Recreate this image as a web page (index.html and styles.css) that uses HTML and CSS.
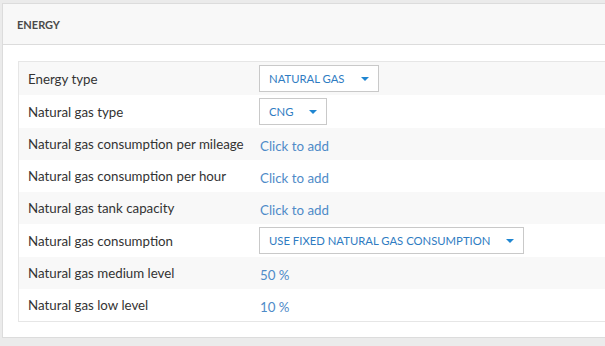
FILE: index.html
```html
<!DOCTYPE html>
<html lang="en">
<head>
    <meta charset="UTF-8">
    <title>Energy</title>
    <link rel="stylesheet" href="styles.css">
</head>
<body>
    <div class="panel">
        <div class="panel-header">ENERGY</div>
        <div class="panel-body">
            <table class="props">
                <tr class="sel-row">
                    <td class="label">Energy type</td>
                    <td><span class="select">NATURAL GAS<i class="caret"></i></span></td>
                </tr>
                <tr class="sel-row">
                    <td class="label">Natural gas type</td>
                    <td><span class="select">CNG<i class="caret"></i></span></td>
                </tr>
                <tr>
                    <td class="label">Natural gas consumption per mileage</td>
                    <td><a class="value" href="#">Click to add</a></td>
                </tr>
                <tr>
                    <td class="label">Natural gas consumption per hour</td>
                    <td><a class="value" href="#">Click to add</a></td>
                </tr>
                <tr>
                    <td class="label">Natural gas tank capacity</td>
                    <td><a class="value" href="#">Click to add</a></td>
                </tr>
                <tr class="sel-row">
                    <td class="label">Natural gas consumption</td>
                    <td><span class="select">USE FIXED NATURAL GAS CONSUMPTION<i class="caret"></i></span></td>
                </tr>
                <tr>
                    <td class="label">Natural gas medium level</td>
                    <td><span class="value">50 %</span></td>
                </tr>
                <tr>
                    <td class="label">Natural gas low level</td>
                    <td><span class="value">10 %</span></td>
                </tr>
            </table>
        </div>
    </div>
</body>
</html>
```

FILE: styles.css
```css
body {
    margin: 0;
    padding: 3px 0 0 2px;
    background-color: #ebebeb;
    font-family: Lato, "Liberation Sans", sans-serif;
    overflow: hidden;
}

.panel {
    width: 640px;
    background: white;
    border: 1px solid #dcdcdc;
}

.panel-header {
    height: 40px;
    line-height: 41px;
    padding-left: 14px;
    background-color: #f8f8f8;
    border-bottom: 1px solid #dcdcdc;
    font-size: 11px;
    font-weight: bold;
    color: #4a4a4a;
}

.panel-body {
    padding: 16px 0 15px 15px;
}

.props {
    width: 100%;
    border-collapse: collapse;
    border: 1px solid #e6e6e6;
}

.props td {
    height: 32px;
    padding: 0;
    vertical-align: middle;
}

.props tr.sel-row td {
    height: 33px;
}

.props tr:nth-child(odd) {
    background-color: #f8f8f8;
}

.props td.label {
    width: 231px;
    padding-left: 9px;
    font-size: 13.3px;
    color: #333;
}

.value {
    display: inline-block;
    padding-left: 1px;
    font-size: 13.3px;
    color: #4f8bc8;
    text-decoration: none;
}

.select {
    display: inline-flex;
    align-items: center;
    height: 25px;
    padding: 0 9px 0 9px;
    border: 1px solid #c9c9c9;
    background: white;
    font-size: 11.3px;
    color: #2f7cc2;
}

.caret {
    display: inline-block;
    width: 0;
    height: 0;
    margin-left: 16px;
    border-left: 4px solid transparent;
    border-right: 4px solid transparent;
    border-top: 4px solid #1f86d1;
}
```
